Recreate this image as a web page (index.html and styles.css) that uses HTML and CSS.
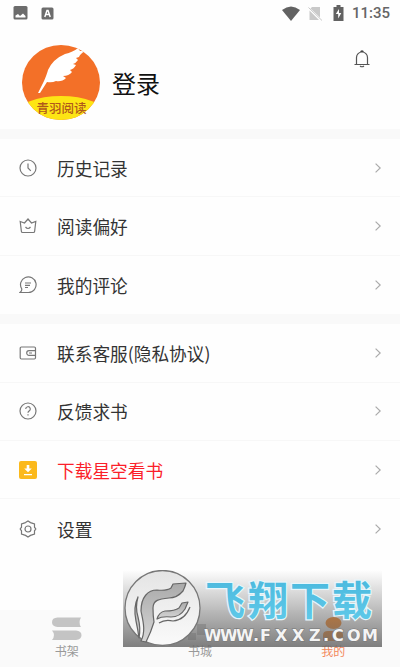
FILE: index.html
```
<!DOCTYPE html>
<html lang="zh">
<head>
  <meta charset="UTF-8">
  <meta name="viewport" content="width=device-width, initial-scale=1.0">
  <title>我的</title>
  <link rel="stylesheet" href="styles.css">
</head>
<body>

  <div class="status-bar">
    <svg class="status-picture" width="15" height="14" viewBox="0 0 15 14">
      <rect x="0.5" y="0" width="14" height="13.5" rx="1.5" fill="#6c6c6c"/>
      <path d="M2.500 11.500V9.500L5 8l2 2 3-2.500 2.500 2.500v1.500z" fill="#fff"/>
    </svg>
    <svg class="status-input" width="13" height="13" viewBox="0 0 13 13">
      <rect x="0.500" y="0.500" width="12" height="12" rx="1.500" fill="#6c6c6c"/>
      <path d="M3.800 10L6 3.500h1L9.200 10M4.800 7.500h3.500" fill="none" stroke="#fff" stroke-width="1.500"/>
    </svg>
    <div class="status-right">
      <svg width="18" height="15" viewBox="0 0 18 15">
        <path d="M0 4Q9-3.200 18 4L9 15z" fill="#626262"/>
      </svg>
      <svg class="status-sim" width="15" height="15" viewBox="0 0 15 15">
        <path d="M4 1h8v10.500L2.500 2.500zM1.500 4.500L11 14H1.500z" fill="#c9c9c9"/>
        <path d="M0.500 1.500L14 14.500" stroke="#c9c9c9" stroke-width="1"/>
      </svg>
      <svg class="status-battery" width="11" height="16" viewBox="0 0 11 16">
        <path d="M3.500 0h4v2H10.500v14H.5V2h3z" fill="#626262"/>
        <path d="M6 4L2.800 9h2.400v4.500L8.300 8H6z" fill="#fff"/>
      </svg>
      <span class="status-time">11:35</span>
    </div>
  </div>

  <header class="profile">
    <svg class="avatar" width="78" height="75" viewBox="0 0 78 75">
      <defs>
        <clipPath id="avatar-clip"><ellipse cx="39" cy="37.500" rx="39" ry="37.500"/></clipPath>
      </defs>
      <g clip-path="url(#avatar-clip)">
        <rect width="78" height="75" fill="#f37028"/>
        <ellipse cx="39" cy="69" rx="44" ry="18" fill="#fde514"/>
        <path d="M16 48L22 36Q25 29 26 25Q31 14 43 9Q51 7 56 3L58 6L63 6Q58 9 57 12L54 13L56 15Q54 18 51 19L54 20Q52 24 48 25L50 27Q47 31 41 31L44 33Q40 37 34 36Q30 38 25 37L18 48z" fill="#fff"/>
      </g>
      <text class="avatar-text" x="14.500" y="68">青羽阅读</text>
    </svg>
    <span class="login">登录</span>
    <svg class="bell" width="16" height="18" viewBox="0 0 16 18">
      <path d="M0.500 14.500h15M2.500 14.500V7.500a5.500 5.500 0 0 1 11 0v7M6 16q2 1.500 4 0" fill="none" stroke="#555" stroke-width="1.200"/>
      <path d="M6.200 2a1.800 1.700 0 0 1 3.600 0z" fill="#444"/>
    </svg>
  </header>

  <main>
    <div class="menu">
      <div class="menu-item">
        <svg class="menu-icon" viewBox="0 0 18 18">
          <circle cx="9" cy="9" r="8"/>
          <path d="M9 4.500V9l2.800 2.800"/>
        </svg>
        <span>历史记录</span>
        <svg class="arrow" viewBox="0 0 6 10"><path d="M.6.6L5.200 5 .6 9.400"/></svg>
      </div>
      <div class="menu-item">
        <svg class="menu-icon" viewBox="0 0 18 18">
          <path d="M1.200 4.500L5.500 6 9 2l3.500 4 4.300-1.500-1.200 10q-.1 1-1.200 1H3.600q-1.100 0-1.200-1z"/>
          <path d="M6.500 10Q9 13 11.500 10"/>
        </svg>
        <span>阅读偏好</span>
        <svg class="arrow" viewBox="0 0 6 10"><path d="M.6.6L5.200 5 .6 9.400"/></svg>
      </div>
      <div class="menu-item">
        <svg class="menu-icon" viewBox="0 0 18 18">
          <path d="M1 16.500h8.500A7.800 7.800 0 1 0 2.800 13Q3 15 1 16.500z"/>
          <path d="M6 7h6M6 9.300h5M6 11.500h3"/>
        </svg>
        <span>我的评论</span>
        <svg class="arrow" viewBox="0 0 6 10"><path d="M.6.6L5.200 5 .6 9.400"/></svg>
      </div>
    </div>

    <div class="menu">
      <div class="menu-item">
        <svg class="menu-icon" viewBox="0 0 18 18">
          <rect x="1.200" y="3" width="15.300" height="12" rx="1.200"/>
          <path d="M16.500 6.700H10a2.300 2.300 0 0 0 0 4.600h6.500M10 9h3"/>
        </svg>
        <span>联系客服(隐私协议)</span>
        <svg class="arrow" viewBox="0 0 6 10"><path d="M.6.6L5.200 5 .6 9.400"/></svg>
      </div>
      <div class="menu-item">
        <svg class="menu-icon" viewBox="0 0 18 18">
          <circle cx="9" cy="9" r="8"/>
          <path d="M6.700 7a2.300 2.300 0 1 1 3.300 2.100q-1 .5-1 1.700M9 12.200v1.400"/>
        </svg>
        <span>反馈求书</span>
        <svg class="arrow" viewBox="0 0 6 10"><path d="M.6.6L5.200 5 .6 9.400"/></svg>
      </div>
      <div class="menu-item download">
        <svg class="menu-icon" viewBox="0 0 18 18">
          <rect class="download-bg" width="18" height="18" rx="2"/>
          <path class="download-arrow" d="M7.700 4h2.600v3.500h2.500L9 11.200 5.200 7.500h2.500zM5 13h8v1.200H5z"/>
        </svg>
        <span>下载星空看书</span>
        <svg class="arrow" viewBox="0 0 6 10"><path d="M.6.6L5.200 5 .6 9.400"/></svg>
      </div>
      <div class="menu-item">
        <svg class="menu-icon" viewBox="0 0 18 18">
          <path d="M6.500 2.600L9 1l2.500 1.600 4 1.400v3.200L16.800 9l-1.300 1.800V14l-4 1.400L9 17l-2.500-1.600-4-1.400v-3.200L1.200 9l1.300-1.800V4z"/>
          <circle cx="9" cy="9" r="3"/>
        </svg>
        <span>设置</span>
        <svg class="arrow" viewBox="0 0 6 10"><path d="M.6.6L5.200 5 .6 9.400"/></svg>
      </div>
    </div>
  </main>

  <nav class="tab-bar">
    <div class="tab">
      <svg width="30" height="24" viewBox="0 0 30 24">
        <path d="M5.500 0.500H29q-3 5 0 9.500H5.500Q0 9.500 0 5.200T5.500.5zM0 13.500H24q5.500.5 5.500 4.700T24 23H0q4-5 0-9.500z" fill="#c4c4c4"/>
      </svg>
      <span>书架</span>
    </div>
    <div class="tab">
      <svg width="30" height="24" viewBox="0 0 30 24">
        <path d="M3 16h8v7H3zM12 7h9v11h-9z" fill="#c4c4c4"/>
      </svg>
      <span>书城</span>
    </div>
    <div class="tab active">
      <svg width="30" height="24" viewBox="0 0 30 24">
        <ellipse cx="15.500" cy="6" rx="8" ry="6" fill="#f58220"/>
        <path d="M5 24V18q0-4 5-4h10q5 0 5 4v6z" fill="#f58220"/>
      </svg>
      <span>我的</span>
    </div>
  </nav>

  <!-- 浮在底部的水印 -->
  <div class="watermark">
    <svg class="watermark-logo" width="78" height="77" viewBox="0 0 78 77">
      <defs>
        <linearGradient id="ribbon" x1="0" y1="0" x2="0" y2="1">
          <stop offset="0" stop-color="#aaa"/>
          <stop offset="1" stop-color="#d6d6d6"/>
        </linearGradient>
        <linearGradient id="disc" x1="0" y1="0" x2="0" y2="1">
          <stop offset="0" stop-color="#e4e4e4"/>
          <stop offset="1" stop-color="#fafafa"/>
        </linearGradient>
      </defs>
      <ellipse cx="39.500" cy="38" rx="37.500" ry="37.500" fill="url(#disc)" stroke="#777" stroke-width="1.300"/>
      <g stroke="#666" stroke-width="1.200" fill="url(#ribbon)" stroke-linejoin="round">
        <path d="M18 71C23 61 20 51 18 41C18 27 25 20 34 20Q44 21 48 18L50 14L63 13Q62 17 60 21Q54 28 46 28C36 29 30 30 30 38Q30 46 31 52Q28 62 23 72z"/>
        <path d="M15 27Q12 37 15 47Q18 59 16 68Q15 60 13 51Q10 37 15 27z"/>
        <path d="M34 49Q36 42 42 41Q52 41 56 38L59 33L65 32L62 39Q57 47 48 47Q39 46 34 49z"/>
        <path d="M36 53Q42 49 50 51Q62 50 67 37" fill="none"/>
      </g>
    </svg>
    <svg class="watermark-words" width="181" height="77" viewBox="0 0 181 77">
      <defs>
        <linearGradient id="blue" x1="0" y1="0" x2="0" y2="1">
          <stop offset="0" stop-color="#46b6dc"/>
          <stop offset="1" stop-color="#62cbea"/>
        </linearGradient>
      </defs>
      <text class="watermark-name" x="4 47 89 131" y="45">飞翔下载</text>
      <text class="watermark-url" x="3 19 35 52 59 74 91 108 122 131 146 161" y="71">WWW.FXXZ.COM</text>
    </svg>
  </div>

</body>
</html>
```
FILE: styles.css
```
* {
  box-sizing: border-box;
}

body {
  margin: 0;
  height: 667px;
  display: flex;
  flex-direction: column;
  overflow: hidden;
  background-color: #fefefe;
  font-family: "Noto Sans CJK SC", sans-serif;
  color: #333;
}

svg {
  display: block;
  flex-shrink: 0;
}

/* 狀態列 */
.status-bar {
  display: flex;
  align-items: center;
  height: 26px;
  padding: 0 8px 0 13px;
}

.status-input {
  margin-left: 13px;
}

.status-right {
  display: flex;
  align-items: center;
  margin-left: auto;
}

.status-sim {
  margin-left: 8px;
}

.status-battery {
  margin-left: 10px;
}

.status-time {
  width: 40px;
  margin-left: 8px;
  font-family: Roboto, sans-serif;
  font-size: 15px;
  font-weight: 500;
  line-height: 26px;
  color: #666;
}

/* 使用者資訊 */
.profile {
  display: flex;
  align-items: flex-start;
  height: 103px;
  padding: 19px 30px 0 22px;
}

.avatar-text {
  font-size: 12.5px;
  font-weight: 500;
  fill: #b0571b;
}

.login {
  margin-left: 12px;
  font-size: 24px;
  line-height: 75px;
  color: #111;
}

.bell {
  margin-left: auto;
  margin-top: 5px;
}

/* 選單 */
.menu {
  border-top: 10px solid #f9f9f9;
}

.menu-item {
  display: flex;
  align-items: center;
  height: 58.400px;
  padding: 0 19px;
  border-bottom: 1px solid #f7f7f7;
  font-size: 17.700px;
  line-height: 26px;
}

.menu-item:last-child {
  border-bottom: none;
}

.menu-icon {
  width: 18px;
  height: 18px;
  margin-right: 20px;
  fill: none;
  stroke: #777;
  stroke-width: 1.200;
}

.arrow {
  width: 6px;
  height: 10px;
  margin-left: auto;
  fill: none;
  stroke: #aaa;
  stroke-width: 1.200;
}

.download {
  color: #fb1f2a;
}

.download-bg {
  fill: #fbb91c;
  stroke: none;
}

.download-arrow {
  fill: #fff;
  stroke: none;
}

/* 底部導覽 */
.tab-bar {
  display: flex;
  height: 57px;
  margin-top: auto;
  background-color: #fafafa;
}

.tab {
  flex: 1;
  display: flex;
  flex-direction: column;
  align-items: center;
  padding-top: 7px;
  font-size: 12px;
  line-height: 20px;
  color: #999;
}

.active {
  color: #f3875a;
}

/* 水印 */
.watermark {
  position: absolute;
  left: 123px;
  top: 570px;
  display: flex;
  width: 259px;
  height: 77px;
  background: linear-gradient(rgba(255, 255, 255, 0), rgba(105, 105, 105, 0.850));
}

.watermark-name {
  font-size: 40px;
  font-weight: 700;
  fill: url(#blue);
  stroke: #e6f6fb;
  stroke-width: 2.500px;
  paint-order: stroke;
}

.watermark-url {
  font-family: "DejaVu Sans", sans-serif;
  font-size: 16px;
  font-weight: 700;
  fill: #f4f4f4;
  stroke: #777;
  stroke-width: 1px;
  paint-order: stroke;
}
```
